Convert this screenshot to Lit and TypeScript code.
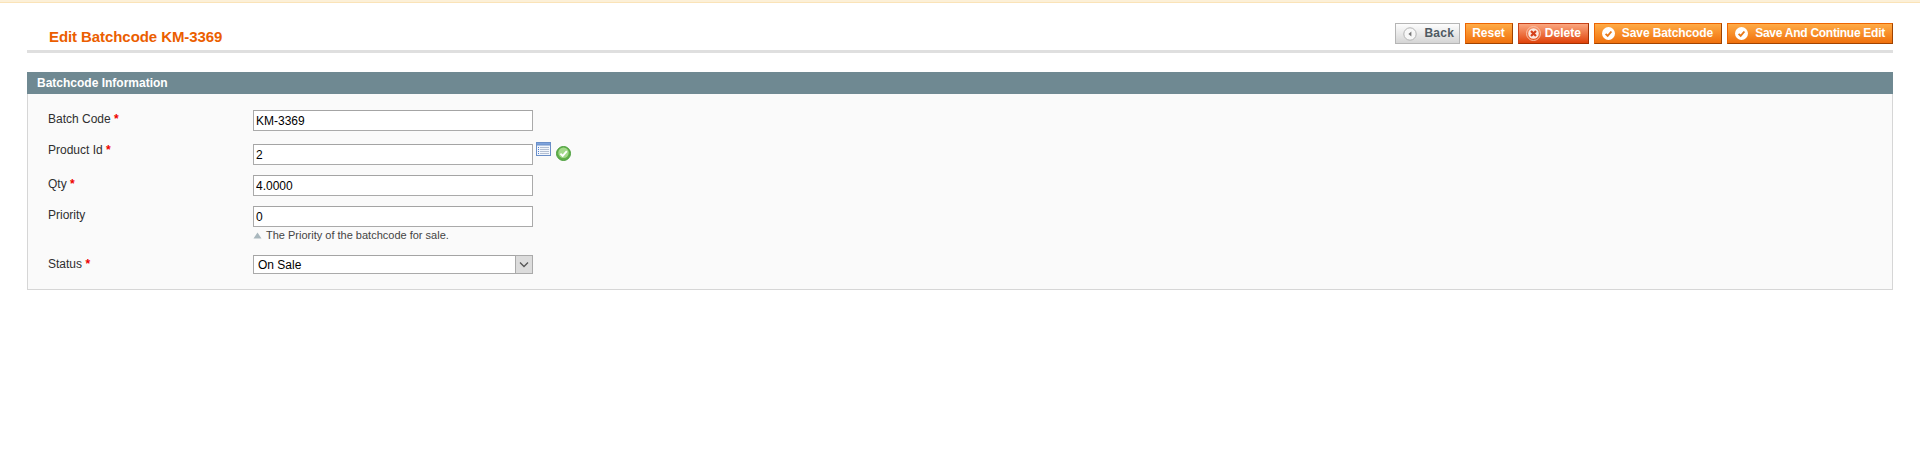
import { LitElement, html, css } from "lit";
import { customElement } from "lit/decorators.js";

const okIcon = html`<svg class="ico" width="13" height="13" viewBox="0 0 13 13"><circle cx="6.5" cy="6.5" r="6.5" fill="#fff"/><path d="M3.6 6.8 5.7 8.9 9.4 4.5" fill="none" stroke="#e8791a" stroke-width="1.9"/></svg>`;
const backIcon = html`<svg class="ico" width="14" height="14" viewBox="0 0 14 14"><circle cx="7" cy="7" r="6.2" fill="#f7f7f7" stroke="#b4b4b4"/><path d="M8.4 4.6 5.4 7 8.4 9.4Z" fill="#777"/></svg>`;
const delIcon = html`<svg class="ico" width="15" height="15" viewBox="0 0 15 15"><circle cx="7.5" cy="7.5" r="7" fill="none" stroke="#f9c0a6"/><circle cx="7.5" cy="7.5" r="5.3" fill="#fbe9e0"/><path d="M5 5 10 10M10 5 5 10" stroke="#d5401a" stroke-width="2.2"/></svg>`;

@customElement("app-root")
export class AppRoot extends LitElement {
  static styles = css`
    :host { display: block; background: #fff; min-height: 473px; font: 12px/18px "Liberation Sans", Arial, sans-serif; color: #2f2f2f; }
    .stripe { height: 2px; background: #fcf0d8; border-bottom: 1px solid #fae3b8; }
    .page { padding: 20px 27px 0 27px; }
    .head { display: flex; justify-content: space-between; align-items: flex-start; height: 27px; border-bottom: 3px solid #dfdfdf; margin-bottom: 19px; }
    h3 { margin: 5px 0 0 22px; font: bold 15px/18px "Liberation Sans", Arial, sans-serif; letter-spacing: -0.08px; color: #eb5e00; }
    .btns { display: flex; gap: 5px; }
    button { display: flex; align-items: center; height: 21px; padding: 0 7px 0 6px; box-sizing: border-box; font: bold 12px/17px "Liberation Sans", Arial, sans-serif; color: #fff; border: 1px solid; border-color: #ed6502 #a04300 #a04300 #ed6502; background: linear-gradient(#ffac47, #f0700c); white-space: nowrap; }
    button.ok { padding: 0 8px 0 7px; letter-spacing: -0.1px; }
    button.ok.tight { padding-right: 7px; letter-spacing: -0.26px; }
    button.ok .ico { margin-right: 7px; }
    button.back { color: #4f5a62; border-color: #b5b5b5; background: linear-gradient(#fdfdfd, #d5d5d5); padding: 0 5px 0 7px; letter-spacing: 0.25px; }
    button.back .ico { margin-right: 7px; }
    button.del { background: linear-gradient(#fba77f, #e0420a); border-color: #c8431c #a33000 #a33000 #c8431c; padding: 0 7px 0 7px; }
    button.del .ico { margin-right: 4px; }
    .ph { height: 22px; background: #6f8992; color: #fff; font: bold 12px/22px "Liberation Sans", Arial, sans-serif; padding-left: 10px; }
    .pb { background: #fafafa; border: 1px solid #d6d6d6; border-top: 0; padding: 16px 0 5px 20px; }
    .row { display: flex; align-items: flex-start; padding-bottom: 10px; }
    label { width: 205px; flex: none; height: 18px; }
    .req { color: #e00; font-weight: bold; }
    input, .sel select { box-sizing: border-box; width: 280px; height: 21px; border: 1px solid #aaa; border-top-color: #a4a4a4; background: #fff; padding: 0 2px; font: 12px "Liberation Sans", Arial, sans-serif; color: #000; outline: 0; display: block; margin: 0; border-radius: 0; }
    .pid input { margin-top: 3px; }
    .lookup { margin: 1px 0 0 3px; }
    .valid { margin: 5px 0 0 5px; }
    .note { display: flex; align-items: center; gap: 4px; height: 16px; font-size: 11px; line-height: 16px; color: #444; }
    .row.prio { padding-bottom: 12px; }
    .sel { position: relative; width: 280px; height: 19px; }
    .sel select { height: 19px; appearance: none; -webkit-appearance: none; padding: 0 0 0 4px; }
    .arrow { position: absolute; right: 0; top: 0; pointer-events: none; }
  `;

  render() {
    const star = html` <span class="req">*</span>`;
    return html`
      <div class="stripe"></div>
      <div class="page">
        <div class="head">
          <h3>Edit Batchcode KM-3369</h3>
          <div class="btns">
            <button class="back">${backIcon}Back</button>
            <button>Reset</button>
            <button class="del">${delIcon}Delete</button>
            <button class="ok">${okIcon}Save Batchcode</button>
            <button class="ok tight">${okIcon}Save And Continue Edit</button>
          </div>
        </div>
        <div class="panel">
          <div class="ph">Batchcode Information</div>
          <div class="pb">
            <div class="row"><label>Batch Code${star}</label><input value="KM-3369" /></div>
            <div class="row pid">
              <label>Product Id${star}</label>
              <input value="2" />
              <svg class="lookup" width="15" height="14" viewBox="0 0 15 14">
                <rect x="0.5" y="0.5" width="14" height="13" fill="#f2f6fc" stroke="#6a8fc8"/>
                <rect x="0.5" y="0.5" width="14" height="2.5" fill="#7ea3dc" stroke="#6a8fc8"/>
                <path d="M2 5.5H3M2 7.5H3M2 9.5H3M2 11.5H3" stroke="#4f7fd0"/>
                <path d="M4 5.5H13M4 7.5H13M4 9.5H13M4 11.5H13" stroke="#b3bfd2"/>
              </svg>
              <svg class="valid" width="15" height="15" viewBox="0 0 15 15">
                <circle cx="7.5" cy="7.5" r="7" fill="#62b04a" stroke="#4a9e3c"/>
                <circle cx="7.5" cy="6.8" r="5.2" fill="#a3d98a"/>
                <path d="M4.4 7.6 6.7 9.9 10.8 5.2" fill="none" stroke="#fff" stroke-width="1.9"/>
              </svg>
            </div>
            <div class="row"><label>Qty${star}</label><input value="4.0000" /></div>
            <div class="row prio">
              <label>Priority</label>
              <div>
                <input value="0" />
                <div class="note">
                  <svg width="9" height="7" viewBox="0 0 9 7"><path d="M4.5 0.5 8.5 6.5H0.5Z" fill="#a9b7bd"/></svg>
                  <span>The Priority of the batchcode for sale.</span>
                </div>
              </div>
            </div>
            <div class="row">
              <label>Status${star}</label>
              <div class="sel">
                <select><option>On Sale</option></select>
                <svg class="arrow" width="18" height="19" viewBox="0 0 18 19">
                  <rect x="0.5" y="0.5" width="17" height="18" fill="#dcdcdc" stroke="#aaa"/>
                  <path d="M5 7.5 9 11.5 13 7.5" fill="none" stroke="#555" stroke-width="1.3"/>
                </svg>
              </div>
            </div>
          </div>
        </div>
      </div>
    `;
  }
}
